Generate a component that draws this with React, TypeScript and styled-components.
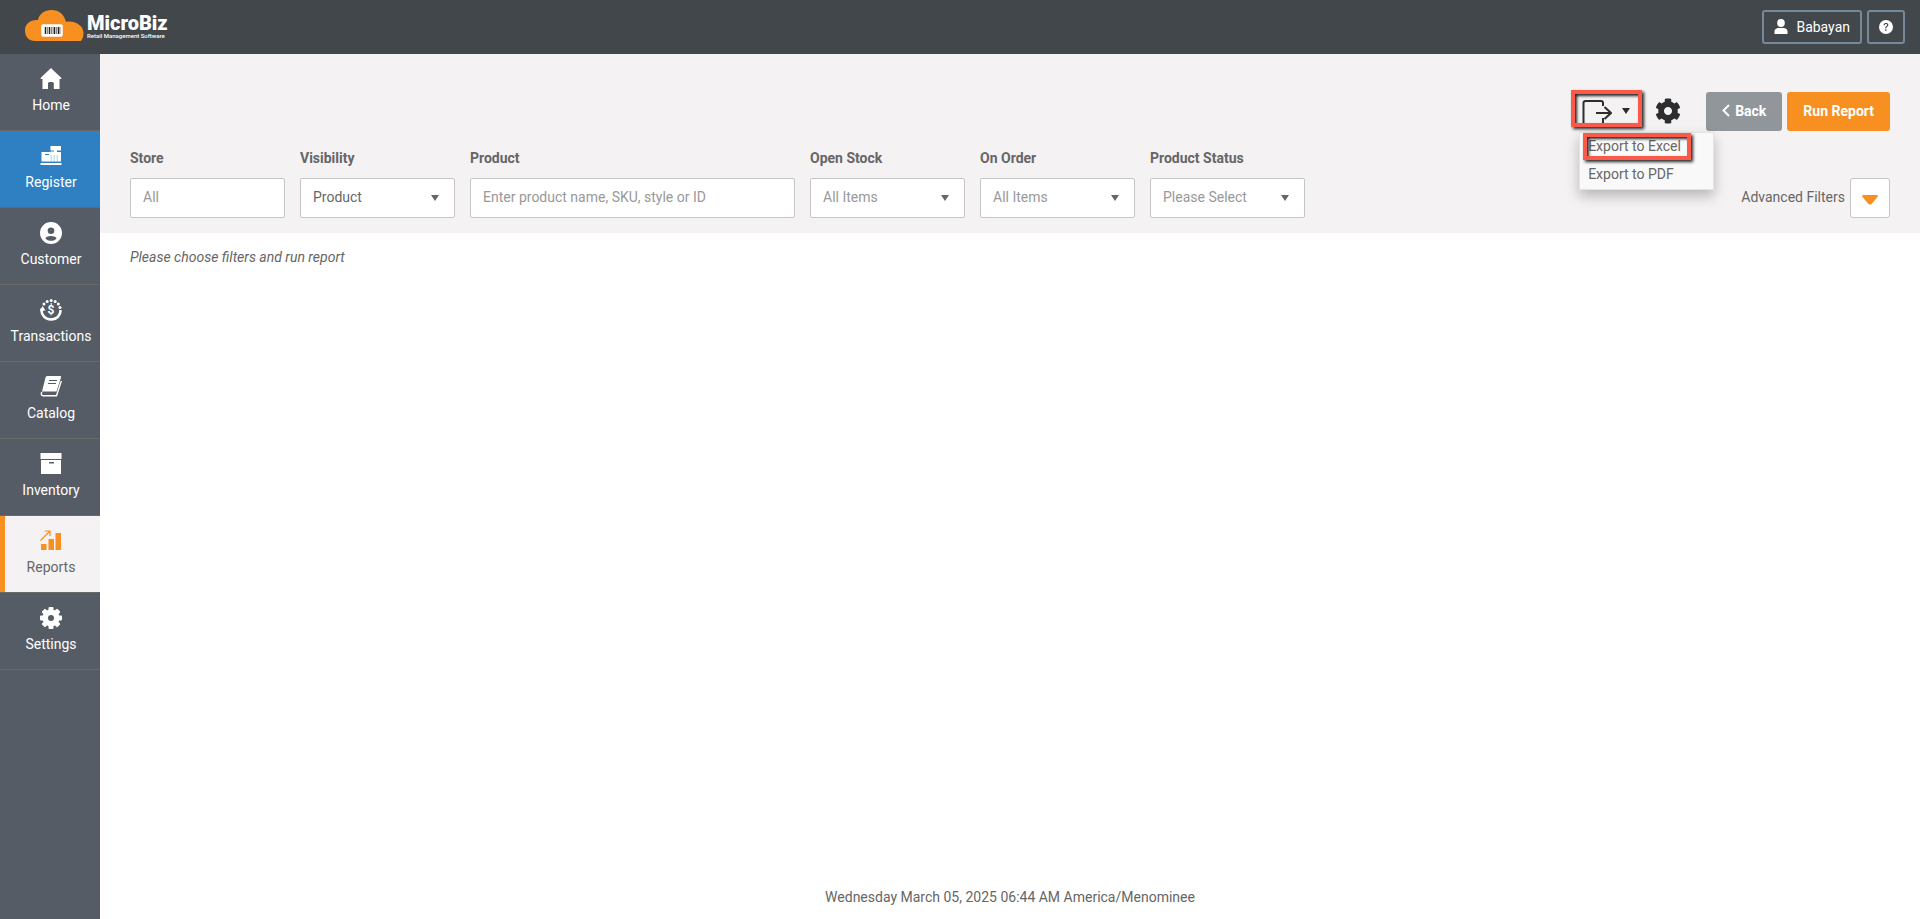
import React, { ReactNode } from "react";
import styled, { createGlobalStyle, css } from "styled-components";
import { FaCog } from "react-icons/fa";
import { BsQuestionCircleFill } from "react-icons/bs";

const GlobalStyle = createGlobalStyle`
  *, *::before, *::after { box-sizing: border-box; }
  body {
    margin: 0;
    background: #fff;
    color: #666;
    font: 14px/20px Roboto, "Liberation Sans", sans-serif;
  }
  button, input, select { font: inherit; color: inherit; }
`;

const Page = styled.div`
  display: flex;
  flex-direction: column;
  min-height: 100vh;
`;

const Header = styled.header`
  display: flex;
  align-items: center;
  justify-content: space-between;
  height: 54px;
  padding: 0 15px 0 25px;
  background: #42474c;
  color: #fff;
`;

const Brand = styled.a`
  display: flex;
  align-items: flex-start;
  gap: 3px;
  padding-bottom: 4px;
  color: #fff;
  text-decoration: none;
`;

const BrandText = styled.span`
  display: flex;
  flex-direction: column;
  padding-top: 3px;
`;

const BrandName = styled.strong`
  font-size: 20px;
  line-height: 20px;
  font-weight: 900;
`;

const BrandTagline = styled.small`
  font-size: 6px;
  line-height: 6px;
  font-weight: 500;
  white-space: nowrap;
`;

const HeaderActions = styled.div`
  display: flex;
  gap: 5px;
`;

const HeaderButton = styled.button`
  display: flex;
  align-items: center;
  gap: 8px;
  height: 34px;
  padding: 0 10px 1px;
  border: 2px solid #75899a;
  border-radius: 3px;
  background: transparent;
  color: #fff;
`;

const Body = styled.div`
  display: flex;
  flex: 1;
`;

const Sidebar = styled.nav`
  flex: 0 0 100px;
  background: #565c65;
`;

type Tone = "plain" | "primary" | "current";

const NavLink = styled.a<{ $tone: Tone }>`
  display: flex;
  flex-direction: column;
  align-items: center;
  gap: 5px;
  height: 77px;
  padding: 14px 0 0 2px;
  border-bottom: 1px solid #686869;
  color: #fff;
  text-decoration: none;
  ${({ $tone }) => $tone === "primary" && css`background: #2f80c3;`}
  ${({ $tone }) =>
    $tone === "current" &&
    css`
      background: #f4f2f3;
      color: #666;
      box-shadow: inset 5px 0 #f79021;
      svg { color: #f79021; }
    `}
`;

const Main = styled.main`
  display: flex;
  flex: 1;
  flex-direction: column;
  min-width: 0;
`;

const Panel = styled.section`
  padding: 38px 30px 15px;
  background: #f4f2f3;
`;

const Toolbar = styled.div`
  display: flex;
  align-items: center;
  justify-content: flex-end;
  gap: 25px;
  height: 39px;
`;

const ButtonGroup = styled.div`
  display: flex;
  gap: 5px;
`;

const ActionButton = styled.button<{ $color: string }>`
  display: flex;
  align-items: center;
  gap: 5px;
  height: 39px;
  padding: 0 16px 2px;
  border: 0;
  border-radius: 3px;
  background: ${({ $color }) => $color};
  color: #fff;
  font-weight: 700;
`;

const IconButton = styled.button`
  display: flex;
  align-items: center;
  gap: 10px;
  height: 39px;
  padding: 0 0 1px;
  border: 0;
  background: none;
  color: #2d2d2f;
`;

const ExportControl = styled.div`
  position: relative;
`;

const ExportMenu = styled.ul`
  position: absolute;
  top: 40px;
  left: -3px;
  z-index: 2;
  width: 135px;
  margin: 0;
  padding: 0;
  border: 1px solid #e4e4e4;
  background: #f9f9f9;
  box-shadow: 0 6px 12px rgba(0, 0, 0, 0.25);
  list-style: none;
`;

const MenuButton = styled.button`
  display: block;
  width: 100%;
  height: 28px;
  padding: 0 8px 2px;
  border: 0;
  background: none;
  text-align: left;
`;

const Highlight = styled.span<{ $box: "trigger" | "item" }>`
  position: absolute;
  z-index: 3;
  border: 4px solid #fb5a4b;
  box-shadow: 2px 2px 3px rgba(0, 0, 0, 0.85), inset 2px 2px 3px rgba(0, 0, 0, 0.85);
  pointer-events: none;
  ${({ $box }) =>
    $box === "trigger"
      ? css`top: -2px; left: -11px; width: 71px; height: 37px;`
      : css`top: 41px; left: 1px; width: 108px; height: 27px;`}
`;

const FilterBar = styled.div`
  display: flex;
  align-items: flex-end;
  justify-content: space-between;
  gap: 15px;
  padding-top: 17px;
`;

const Filters = styled.div`
  display: grid;
  flex: 0 1 1175px;
  grid-template-columns: repeat(7, minmax(0, 1fr));
  gap: 15px;
`;

const Field = styled.div<{ $span?: number }>`
  display: flex;
  flex-direction: column;
  gap: 10px;
  grid-column: span ${({ $span = 1 }) => $span};
`;

const Label = styled.label`
  font-weight: 700;
  white-space: nowrap;
`;

const controlBox = css`
  width: 100%;
  height: 40px;
  padding: 0 12px 2px;
  border: 1px solid #c6c6c6;
  border-radius: 2px;
  background: #fff;
`;

const TextInput = styled.input`
  ${controlBox}
  &::placeholder { color: #999; opacity: 1; }
`;

const SelectWrap = styled.div`
  position: relative;
  svg {
    position: absolute;
    top: 17px;
    right: 16px;
    pointer-events: none;
  }
`;

const SelectInput = styled.select<{ $muted: boolean }>`
  ${controlBox}
  appearance: none;
  color: ${({ $muted }) => ($muted ? "#999" : "#666")};
`;

const Advanced = styled.div`
  display: flex;
  align-items: center;
  gap: 5px;
  white-space: nowrap;
`;

const AdvancedLabel = styled.label`
  padding-bottom: 2px;
`;

const ToggleButton = styled.button`
  display: flex;
  align-items: center;
  justify-content: center;
  width: 40px;
  height: 40px;
  padding: 4px 0 0;
  border: 1px solid #c6c6c6;
  border-radius: 3px;
  background: #fff;
`;

const Hint = styled.p`
  flex: 1;
  margin: 0;
  padding: 14px 30px;
  font-style: italic;
`;

const Footer = styled.footer`
  padding: 12px 0;
  text-align: center;
`;

const NavIcon = ({ children }: { children: ReactNode }) => (
  <svg width="22" height="22" viewBox="0 0 22 22" fill="currentColor" aria-hidden="true">
    {children}
  </svg>
);

const Caret = () => (
  <svg width="8" height="6" viewBox="0 0 8 6" fill="currentColor" aria-hidden="true">
    <path d="M0 0h8L4 6z" />
  </svg>
);

const CloudLogo = () => (
  <svg width="59" height="31" viewBox="0 0 59 31" aria-hidden="true">
    <path
      fill="#f79021"
      d="M10 31C4 31 0 27 0 20.500C0 14 5 9.500 13 10C14 4 19.500 0 26.500 0C34 0 39 4 41 12C50 10 58.500 16 58.500 23C58.500 26.500 57.500 29 56 31z"
    />
    <rect x="17" y="15" width="20" height="11" rx="1" fill="#fff" stroke="#fff" strokeWidth="1.500" />
    <path
      stroke="#222"
      d="M20.500 17v7M24.500 17v7M29.500 17v7M33.500 17v7"
      strokeWidth="1.500"
    />
    <path stroke="#555" d="M22.500 17v7M26.500 17v7M28 17v7M31.500 17v7M35 17v7" strokeWidth=".7" />
  </svg>
);

const teeth = [0, 45, 90, 135];

const icons: Record<string, ReactNode> = {
  Home: (
    <path d="M11 0L14.500 3.500L21 9.500L21.500 11H19.500V21H13.800V15.500Q13.800 14 12.500 14H9.500Q8 14 8 15.500V21H2.500V11H.500L1 9.500z" />
  ),
  Register: (
    <>
      <path d="M10.500 1h10.500v4.500h-4v1.500h4v9.500H1.500V7h9V6.500H14V5.500h-3.500z" />
      <path d="M.5 18h21v2H.5z" />
      <path d="M5 9.500h4" stroke="#2f80c3" strokeWidth="1" />
      <path d="M10.500 11h8M10.500 13h8M10.500 15h8" stroke="#2f80c3" strokeWidth="1" strokeDasharray="1.500 1.500" opacity=".5" />
    </>
  ),
  Customer: (
    <path
      fillRule="evenodd"
      d="M11 0a11 11 0 1 1 0 22a11 11 0 1 1 0-22zM11 5.500a3.300 3.300 0 1 0 0 6.600a3.300 3.300 0 1 0 0-6.600zM11 14C8 14 5.500 15 5.500 16.500C6.500 18 9 18.800 11 18.800S15.500 18 16.500 16.500C16.500 15 14 14 11 14z"
    />
  ),
  Transactions: (
    <>
      <path d="M1.500 9.500C1 16 5 20.500 11 20.500C17 20.500 20.800 16 20.500 11" fill="none" stroke="currentColor" strokeWidth="2.500" />
      <path d="M0 12L2.500 7L5.500 11.500z" />
      <g>
        <circle cx="4" cy="5" r="1.500" />
        <circle cx="7.200" cy="2.400" r="1.500" />
        <circle cx="11.200" cy="1.500" r="1.500" />
        <circle cx="15.200" cy="2.500" r="1.500" />
        <circle cx="18.300" cy="5" r="1.500" />
        <circle cx="20" cy="8.500" r="1.500" />
      </g>
      <text x="11" y="15" fontSize="12" fontWeight="700" textAnchor="middle">$</text>
    </>
  ),
  Catalog: (
    <>
      <path d="M7 0H20.500Q21.500 0 21 1.500L16.500 15.500H2L5.500 1.500Q6 0 7 0z" />
      <path d="M2 16C.500 17.500 1.500 19.800 3 19.800H16.500L21.300 5" fill="none" stroke="currentColor" strokeWidth="1.400" />
      <path d="M9 4.500h8M8 7.500h8" stroke="#565c65" strokeWidth="1.200" />
    </>
  ),
  Inventory: (
    <path fillRule="evenodd" d="M.5 0h21v6h-21zM1 7h20v14H1zM9 9v1.500h5V9z" />
  ),
  Reports: (
    <>
      <path d="M1 14h5.500v6H1zM8.500 9H14v11H8.500zM15.500 3H21v17h-5.500z" />
      <path d="M.5 10.500L9.500 1.500M4.500 1H10V6" fill="none" stroke="currentColor" strokeWidth="1.200" />
    </>
  ),
  Settings: (
    <>
      {teeth.map((angle) => (
        <rect key={angle} x="8.500" y="0" width="5" height="22" rx="1" transform={`rotate(${angle} 11 11)`} />
      ))}
      <circle cx="11" cy="11" r="8.500" />
      <circle cx="11" cy="11" r="3" fill="#565c65" />
    </>
  ),
};

const navItems: { name: string; tone: Tone }[] = [
  { name: "Home", tone: "plain" },
  { name: "Register", tone: "primary" },
  { name: "Customer", tone: "plain" },
  { name: "Transactions", tone: "plain" },
  { name: "Catalog", tone: "plain" },
  { name: "Inventory", tone: "plain" },
  { name: "Reports", tone: "current" },
  { name: "Settings", tone: "plain" },
];

type SelectFieldProps = { id: string; label: string; value: string; muted?: boolean };

const SelectField = ({ id, label, value, muted = true }: SelectFieldProps) => (
  <Field>
    <Label htmlFor={id}>{label}</Label>
    <SelectWrap>
      <SelectInput id={id} $muted={muted}>
        <option>{value}</option>
      </SelectInput>
      <Caret />
    </SelectWrap>
  </Field>
);

export default function App() {
  return (
    <Page>
      <GlobalStyle />
      <Header>
        <Brand href="#">
          <CloudLogo />
          <BrandText>
            <BrandName>MicroBiz</BrandName>
            <BrandTagline>Retail Management Software</BrandTagline>
          </BrandText>
        </Brand>
        <HeaderActions>
          <HeaderButton type="button">
            <svg width="14" height="15" viewBox="0 0 14 15" fill="currentColor" aria-hidden="true">
              <ellipse cx="7" cy="4" rx="3.800" ry="4" />
              <path d="M.5 15V12.500Q.500 9.500 4 9H10Q13.500 9.500 13.500 12.500V15z" />
            </svg>
            Babayan
          </HeaderButton>
          <HeaderButton type="button" aria-label="Help">
            <BsQuestionCircleFill size={14} />
          </HeaderButton>
        </HeaderActions>
      </Header>
      <Body>
        <Sidebar>
          {navItems.map(({ name, tone }) => (
            <NavLink key={name} href="#" $tone={tone}>
              <NavIcon>{icons[name]}</NavIcon>
              {name}
            </NavLink>
          ))}
        </Sidebar>
        <Main>
          <Panel>
            <Toolbar>
              <ExportControl>
                <IconButton type="button" aria-label="Export">
                  <svg width="30" height="25" viewBox="0 0 30 25" fill="none" stroke="currentColor" strokeWidth="2" aria-hidden="true">
                    <path d="M21 7V4Q21 2 19 2H3.500Q1.500 2 1.500 4V25M21 19V25" />
                    <path d="M14 14H29M22.500 8L29 14L22.500 20" />
                  </svg>
                  <Caret />
                </IconButton>
                <ExportMenu>
                  <li><MenuButton type="button">Export to Excel</MenuButton></li>
                  <li><MenuButton type="button">Export to PDF</MenuButton></li>
                </ExportMenu>
                <Highlight $box="trigger" />
                <Highlight $box="item" />
              </ExportControl>
              <IconButton type="button" aria-label="Report settings">
                <FaCog size={26} />
              </IconButton>
              <ButtonGroup>
                <ActionButton type="button" $color="#91969b">
                  <svg width="8" height="13" viewBox="0 0 8 13" fill="none" stroke="currentColor" strokeWidth="2" aria-hidden="true">
                    <path d="M7 1L1.500 6.500L7 12" />
                  </svg>
                  Back
                </ActionButton>
                <ActionButton type="button" $color="#f79021">Run Report</ActionButton>
              </ButtonGroup>
            </Toolbar>
            <FilterBar>
              <Filters>
                <Field>
                  <Label htmlFor="store">Store</Label>
                  <TextInput id="store" placeholder="All" />
                </Field>
                <SelectField id="visibility" label="Visibility" value="Product" muted={false} />
                <Field $span={2}>
                  <Label htmlFor="product">Product</Label>
                  <TextInput id="product" placeholder="Enter product name, SKU, style or ID" />
                </Field>
                <SelectField id="open-stock" label="Open Stock" value="All Items" />
                <SelectField id="on-order" label="On Order" value="All Items" />
                <SelectField id="status" label="Product Status" value="Please Select" />
              </Filters>
              <Advanced>
                <AdvancedLabel htmlFor="advanced">Advanced Filters</AdvancedLabel>
                <ToggleButton id="advanced" type="button">
                  <svg width="16" height="10" viewBox="0 0 16 10" fill="#f79021" aria-hidden="true">
                    <path d="M1 0H15Q16.500 .500 15.500 2L9.500 9Q8 10.500 6.500 9L.500 2Q-.500 .500 1 0z" />
                  </svg>
                </ToggleButton>
              </Advanced>
            </FilterBar>
          </Panel>
          <Hint>Please choose filters and run report</Hint>
          <Footer>Wednesday March 05, 2025 06:44 AM America/Menominee</Footer>
        </Main>
      </Body>
    </Page>
  );
}
